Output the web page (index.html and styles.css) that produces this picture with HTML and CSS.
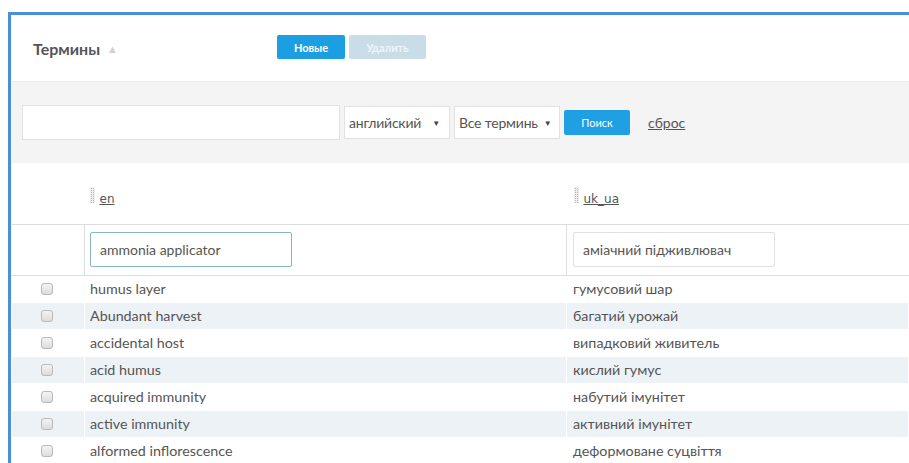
FILE: index.html
```html
<!DOCTYPE html>
<html lang="ru">
<head>
<meta charset="utf-8">
<title>Термины</title>
<link rel="stylesheet" href="styles.css">
</head>
<body>
<div class="frame">
  <div class="toolbar">
    <h1 class="title">Термины <span class="sort">&#9650;</span></h1>
    <div class="actions">
      <button class="btn btn-primary">Новые</button>
      <button class="btn btn-disabled">Удалить</button>
    </div>
  </div>

  <div class="filters">
    <input class="search-input" type="text">
    <div class="select select-lang">английский <span class="caret">&#9660;</span></div>
    <div class="select select-kind">Все терминь <span class="caret">&#9660;</span></div>
    <button class="btn btn-search">Поиск</button>
    <a class="reset" href="#">сброс</a>
  </div>

  <table class="grid">
    <colgroup>
      <col class="col-check">
      <col class="col-en">
      <col class="col-uk">
    </colgroup>
    <thead>
      <tr class="head-row">
        <th></th>
        <th><span class="grip"></span><a href="#" class="col-link">en</a></th>
        <th><span class="grip"></span><a href="#" class="col-link">uk_ua</a></th>
      </tr>
      <tr class="filter-row">
        <td></td>
        <td><input class="cell-input cell-input-active" type="text" value="ammonia applicator"></td>
        <td><input class="cell-input" type="text" value="аміачний підживлювач"></td>
      </tr>
    </thead>
    <tbody>
      <tr><td><span class="check"></span></td><td>humus layer</td><td>гумусовий шар</td></tr>
      <tr><td><span class="check"></span></td><td>Abundant harvest</td><td>багатий урожай</td></tr>
      <tr><td><span class="check"></span></td><td>accidental host</td><td>випадковий живитель</td></tr>
      <tr><td><span class="check"></span></td><td>acid humus</td><td>кислий гумус</td></tr>
      <tr><td><span class="check"></span></td><td>acquired immunity</td><td>набутий імунітет</td></tr>
      <tr><td><span class="check"></span></td><td>active immunity</td><td>активний імунітет</td></tr>
      <tr><td><span class="check"></span></td><td>alformed inflorescence</td><td>деформоване суцвіття</td></tr>
    </tbody>
  </table>
</div>
</body>
</html>
```

FILE: styles.css
```css
html, body {
  margin: 0;
  padding: 0;
  background: #fff;
}

body {
  font-family: Lato, "Noto Sans", sans-serif;
  color: #555;
  font-size: 14px;
}

/* outer panel: blue rule along the top and left edges */
.frame {
  margin: 12px 0 0 8px;
  border-top: 3px solid #4a8fda;
  border-left: 3px solid #4a8fda;
  height: 448px;
  overflow: hidden;
}

/* top bar with title and actions */
.toolbar {
  display: flex;
  align-items: center;
  height: 66px;
  padding-left: 22px;
  border-bottom: 1px solid #ebebeb;
  background: #fff;
}

.title {
  margin: 0;
  font-size: 16px;
  font-weight: 700;
  color: #555;
  width: 244px;
  display: flex;
  align-items: center;
  gap: 7px;
}

.sort {
  font-size: 11px;
  color: #d0d0d0;
}

.actions {
  display: flex;
  gap: 4px;
  margin-top: -2px;
}

.btn {
  border: 0;
  border-radius: 2px;
  font-family: Lato, "Noto Sans", sans-serif;
  font-size: 11px;
  font-weight: 700;
  color: #fff;
  height: 24px;
  padding: 0;
  cursor: pointer;
}

.btn-primary {
  width: 68px;
  background: #1b9ee2;
}

.btn-disabled {
  width: 77px;
  background: #c9dde9;
  color: #eef5fa;
}

/* search filters */
.filters {
  display: flex;
  align-items: center;
  height: 81px;
  padding-left: 11px;
  background: #f4f4f4;
}

.search-input {
  box-sizing: border-box;
  width: 318px;
  height: 35px;
  border: 1px solid #e1e1e1;
  background: #fff;
  margin: 0 4px 0 0;
  padding: 0 8px;
}

.select {
  box-sizing: border-box;
  height: 33px;
  border: 1px solid #e1e1e1;
  background: #fff;
  display: flex;
  align-items: center;
  padding-left: 4px;
  font-size: 14px;
  color: #555;
  margin-right: 4px;
  white-space: nowrap;
  letter-spacing: -0.2px;
}

.select-lang {
  width: 106px;
}

.select-lang .caret {
  margin-left: auto;
  margin-right: 9px;
}

.select-kind {
  width: 106px;
}

.select-kind .caret {
  margin-left: 6px;
}

.caret {
  font-size: 8px;
  color: #444;
}

.btn-search {
  width: 66px;
  height: 25px;
  background: #1ea0e3;
  font-weight: 400;
}

.reset {
  margin-left: 18px;
  color: #555;
  font-size: 14px;
}

/* data grid */
.grid {
  border-collapse: collapse;
  table-layout: fixed;
  width: 100%;
}

.col-check { width: 73px; }
.col-en { width: 482px; }

.head-row th {
  box-sizing: border-box;
  height: 61px;
  text-align: left;
  font-weight: 400;
  vertical-align: top;
  padding: 24px 0 0 5px;
  border-bottom: 1px solid #ddd;
}

.head-row th:last-child {
  padding-left: 7px;
}

/* dotted drag handle in front of column titles */
.grip {
  display: inline-block;
  width: 5px;
  height: 16px;
  margin-right: 5px;
  vertical-align: top;
  background-color: #b8b8b8;
  background-image:
    linear-gradient(90deg, #eee 1px, transparent 1px),
    linear-gradient(#eee 1px, transparent 1px);
  background-size: 2px 2px;
}

.col-link {
  display: inline-block;
  color: #555;
  font-size: 12px;
  font-family: "DejaVu Sans", "Noto Sans", sans-serif;
  margin-top: 5px;
}

.filter-row td {
  box-sizing: border-box;
  height: 51px;
  padding: 0 0 0 5px;
  border-bottom: 1px solid #ddd;
}

.filter-row td + td {
  border-left: 1px solid #ddd;
}

.filter-row td:last-child {
  padding-left: 6px;
}

.cell-input {
  box-sizing: border-box;
  width: 202px;
  height: 35px;
  border: 1px solid #e0e0e0;
  border-radius: 2px;
  padding: 0 9px;
  font-family: Lato, "Noto Sans", sans-serif;
  font-size: 14px;
  color: #555;
  outline: none;
}

.cell-input-active {
  border-color: #86b4c9;
}

tbody td {
  height: 26px;
  padding: 0 0 0 5px;
  border: 1px solid #fff;
  white-space: nowrap;
  font-size: 14.3px;
}

tbody td:last-child {
  padding-left: 6px;
}

tbody tr:nth-child(even) td {
  background: #edf2f7;
}

tbody td:first-child {
  padding: 0 0 0 29px;
}

.check {
  display: block;
  box-sizing: border-box;
  width: 12px;
  height: 12px;
  border: 1px solid #b9b9b9;
  border-radius: 3px;
  background: linear-gradient(#f4f4f4, #dcdcdc);
}
```
